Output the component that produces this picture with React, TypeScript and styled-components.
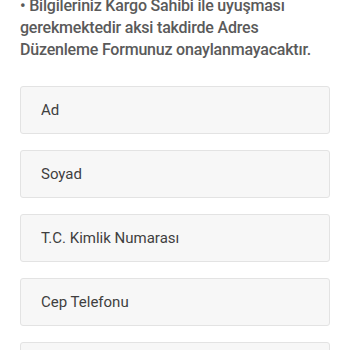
import React from 'react'
import styled, { createGlobalStyle } from 'styled-components'

const GlobalStyle = createGlobalStyle`
  html, body {
    margin: 0;
    padding: 0;
    background: #ffffff;
    overflow: hidden;
  }
  body {
    font-family: Roboto, 'Noto Sans', sans-serif;
  }
`

const Page = styled.div`
  width: 350px;
  height: 350px;
  padding: 0 20px;
  box-sizing: border-box;
  overflow: hidden;
`

const Notice = styled.p`
  margin: -5px 0 0;
  font-size: 16px;
  line-height: 22px;
  font-weight: 500;
  letter-spacing: -0.2px;
  color: #5a5a5a;
`

const Form = styled.form`
  display: flex;
  flex-direction: column;
  row-gap: 16px;
  margin-top: 25px;
`

const Field = styled.input`
  height: 48px;
  width: 100%;
  box-sizing: border-box;
  padding: 0 20px;
  border: 1px solid #e3e3e3;
  border-radius: 3px;
  background: #f7f7f7;
  font-family: Roboto, 'Noto Sans', sans-serif;
  font-size: 15px;
  color: #3f3f3f;
  outline: none;

  &::placeholder {
    color: #3f3f3f;
    opacity: 1;
  }
`

const fields = ['Ad', 'Soyad', 'T.C. Kimlik Numarası', 'Cep Telefonu', 'E-posta']

const App = () => {
  return (
    <>
      <GlobalStyle />
      <Page>
        <Notice>
          • Bilgileriniz Kargo Sahibi ile uyuşması gerekmektedir aksi takdirde Adres Düzenleme
          Formunuz onaylanmayacaktır.
        </Notice>
        <Form>
          {fields.map((title, index) => (
            <Field key={index} placeholder={title} />
          ))}
        </Form>
      </Page>
    </>
  )
}

export default App
